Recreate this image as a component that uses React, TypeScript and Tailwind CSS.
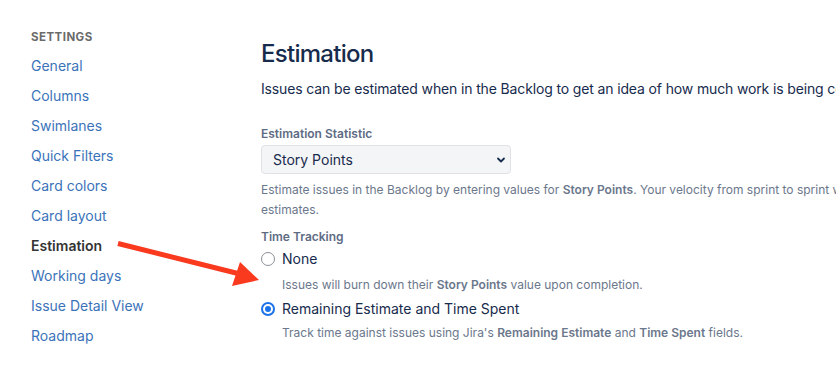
import React from 'react';

const navItems = [
  'General',
  'Columns',
  'Swimlanes',
  'Quick Filters',
  'Card colors',
  'Card layout',
  'Estimation',
  'Working days',
  'Issue Detail View',
  'Roadmap',
];

const Radio: React.FC<{ checked?: boolean }> = ({ checked }) =>
  checked ? (
    <span className="flex h-[14px] w-[14px] items-center justify-center rounded-full bg-[#1a73e8]">
      <span className="flex h-[10px] w-[10px] items-center justify-center rounded-full bg-white">
        <span className="h-[6px] w-[6px] rounded-full bg-[#1a73e8]" />
      </span>
    </span>
  ) : (
    <span className="h-[14px] w-[14px] rounded-full border border-[#8a8f99] bg-white" />
  );

const App: React.FC = () => {
  return (
    <div
      className="relative flex h-[377px] w-[836px] overflow-hidden bg-white"
      style={{ fontFamily: 'Inter, "Noto Sans", sans-serif' }}
    >
      <aside className="w-[261px] shrink-0 pl-[31px] pt-[30px]">
        <h3 className="mb-[13px] text-[11.5px] font-bold uppercase leading-[14px] tracking-[0.04em] text-[#6b6b6b]">
          Settings
        </h3>
        <ul className="flex flex-col gap-[12px] text-[14px] leading-[18px]">
          {navItems.map((item) =>
            item === 'Estimation' ? (
              <li key={item} className="font-semibold text-[#333]">
                {item}
              </li>
            ) : (
              <li key={item} className="text-[#3b73b9]">
                {item}
              </li>
            )
          )}
        </ul>
      </aside>

      <main className="w-[760px] shrink-0 pt-[39px] text-[#172b4d]">
        <h1 className="text-[24px] font-medium leading-[30px] tracking-[-0.03em]">Estimation</h1>
        <p className="mt-[11px] whitespace-nowrap text-[14px] leading-[18px] tracking-[-0.01em]">
          Issues can be estimated when in the Backlog to get an idea of how much work is being committed in each
          sprint.
        </p>

        <div className="mt-[28px]">
          <label className="block text-[12px] font-semibold leading-[16px] text-[#5e6c84]">
            Estimation Statistic
          </label>
          <div className="mt-[3px] flex h-[29px] w-[250px] items-center justify-between rounded-[4px] border border-[#dfe1e6] bg-[#f4f5f7] pl-[11px] pr-[3px] text-[14px]">
            <span>Story Points</span>
            <svg width="12" height="12" viewBox="0 0 12 12" fill="none">
              <path d="M3 4.5 6 7.5 9 4.5" stroke="#172b4d" strokeWidth="1.8" strokeLinecap="round" strokeLinejoin="round" />
            </svg>
          </div>
          <p className="mt-[6px] text-[12px] leading-[20px] text-[#6b778c]">
            Estimate issues in the Backlog by entering values for <b className="font-semibold">Story Points</b>. Your
            velocity from sprint to sprint will be calculated using these estimates.
          </p>
        </div>

        <div className="mt-[9px]">
          <label className="block text-[12px] font-semibold leading-[16px] text-[#5e6c84]">Time Tracking</label>
          <div className="mt-[4px] flex items-center gap-[7px]">
            <Radio />
            <span className="text-[14px] leading-[20px]">None</span>
          </div>
          <p className="mt-[8px] pl-[21px] text-[12px] leading-[16px] text-[#6b778c]">
            Issues will burn down their <b className="font-semibold">Story Points</b> value upon completion.
          </p>
          <div className="mt-[6px] flex items-center gap-[7px]">
            <Radio checked />
            <span className="text-[14px] leading-[20px]">Remaining Estimate and Time Spent</span>
          </div>
          <p className="mt-[6px] pl-[21px] text-[12px] leading-[16px] text-[#6b778c]">
            Track time against issues using Jira's <b className="font-semibold">Remaining Estimate</b> and{' '}
            <b className="font-semibold">Time Spent</b> fields.
          </p>
        </div>
      </main>

      <svg className="pointer-events-none absolute left-0 top-0" width="836" height="377">
        <line x1="118" y1="243.5" x2="240" y2="274" stroke="#fa3a1f" strokeWidth="5" />
        <polygon points="259,280 240,262 232,286" fill="#fa3a1f" />
      </svg>
    </div>
  );
};

export default App;
